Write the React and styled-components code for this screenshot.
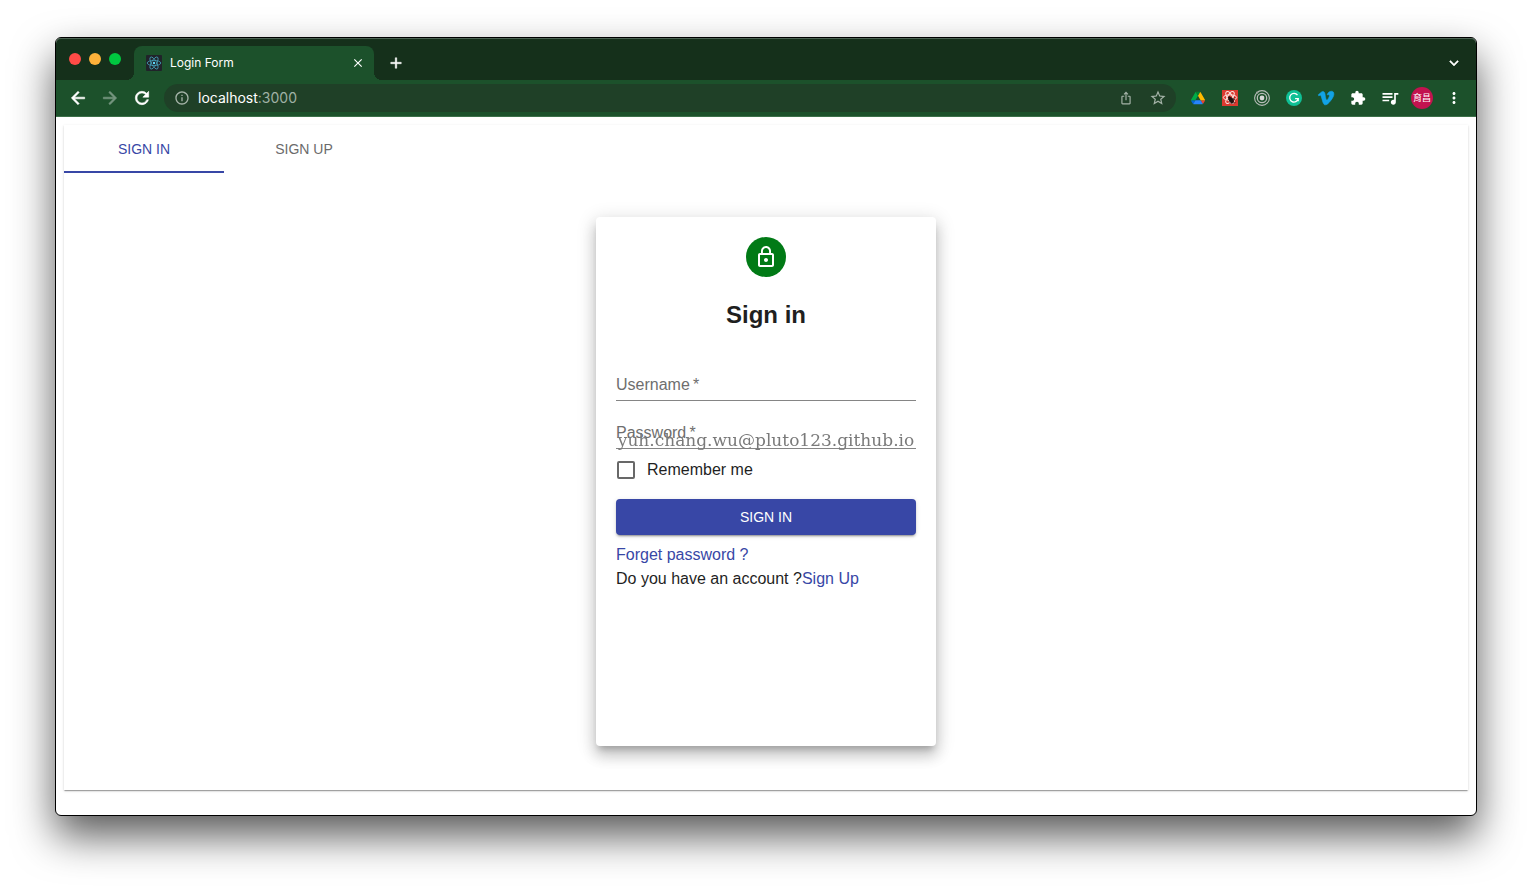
import React, { useState } from "react";
import styled, { createGlobalStyle } from "styled-components";
import {
  MdAdd,
  MdArrowBack,
  MdArrowForward,
  MdClose,
  MdExtension,
  MdInfoOutline,
  MdIosShare,
  MdKeyboardArrowDown,
  MdLockOutline,
  MdMoreVert,
  MdQueueMusic,
  MdRefresh,
  MdStarBorder,
} from "react-icons/md";
import { FaVimeoV } from "react-icons/fa";

const chromeFont = 'Inter, "Noto Sans CJK TC", sans-serif';
const primary = "#3847a6";

const GlobalStyle = createGlobalStyle`
  *, *::before, *::after { box-sizing: border-box; }
  body {
    margin: 0;
    background: #fff;
    color: #1f1f1f;
    font: 16px/24px "Liberation Sans", Helvetica, Arial, sans-serif;
  }
  button { margin: 0; padding: 0; border: 0; background: none; font: inherit; cursor: pointer; }
`;

const Desktop = styled.div`
  display: flex;
  flex-direction: column;
  min-height: 100vh;
  padding: 37px 55px 73px;
  overflow: hidden;
`;

const Window = styled.div`
  position: relative;
  display: flex;
  flex: 1;
  flex-direction: column;
  border: 1px solid #000;
  border-radius: 6px;
  background: #fff;
  box-shadow: 0 20px 42px rgba(0, 0, 0, 0.65);
`;

const TabStrip = styled.div`
  display: flex;
  align-items: flex-end;
  height: 42px;
  padding: 0 6px 0 13px;
  border-radius: 5px 5px 0 0;
  background: #15301b;
  box-shadow: inset 0 1px #4c6253;
  color: #fff;
  font-family: ${chromeFont};
`;

const TrafficLights = styled.div`
  display: flex;
  align-self: center;
  gap: 8px;
  margin-right: 13px;
`;

const Light = styled.button`
  width: 12px;
  height: 12px;
  border-radius: 50%;
  background: ${(p) => p.$color};
`;

const BrowserTab = styled.div`
  position: relative;
  display: flex;
  align-items: center;
  gap: 8px;
  width: 240px;
  height: 34px;
  padding: 0 8px 0 12px;
  border-radius: 8px 8px 0 0;
  background: #1c512b;
  font-size: 12px;

  &::before,
  &::after {
    content: "";
    position: absolute;
    bottom: 0;
    width: 8px;
    height: 8px;
  }
  &::before {
    right: 100%;
    background: radial-gradient(circle at 0 0, transparent 8px, #1c512b 8px);
  }
  &::after {
    left: 100%;
    background: radial-gradient(circle at 100% 0, transparent 8px, #1c512b 8px);
  }
`;

const TabTitle = styled.span`
  flex: 1;
`;

const IconButton = styled.button`
  display: flex;
  flex: none;
  align-items: center;
  justify-content: center;
  width: ${(p) => p.$width || 32}px;
  height: ${(p) => p.$height || 28}px;
  margin-left: ${(p) => p.$push || "0"};
  color: ${(p) => p.$color || "#fff"};

  /* Material icons carry an unfilled bounding box that must stay unstroked */
  path[d^="M0 0h24v24H0"] {
    stroke: none;
  }
`;

const Toolbar = styled.div`
  display: flex;
  align-items: center;
  height: 37px;
  padding: 0 6px;
  border-bottom: 1px solid #3c7049;
  background: #1c512b;
  font-family: ${chromeFont};
`;

const AddressBar = styled.div`
  display: flex;
  flex: 1;
  align-items: center;
  height: 28px;
  margin: 0 6px;
  padding: 0 2px;
  border-radius: 14px;
  background: #1f4027;
  color: #a0b1a5;
  font-size: 14px;
`;

const Address = styled.span`
  flex: 1;
`;

const Host = styled.span`
  color: #fff;
`;

const Profile = styled.span`
  display: grid;
  place-items: center;
  width: 22px;
  height: 22px;
  border-radius: 50%;
  background: #c2134f;
  color: #fff;
  font-size: 9px;
  line-height: 12px;
`;

const Viewport = styled.main`
  display: flex;
  flex: 1;
  flex-direction: column;
  padding: 8px 8px 25px;
`;

const Paper = styled.section`
  display: flex;
  flex: 1;
  flex-direction: column;
  background: #fff;
  border-radius: ${(p) => p.$radius || 0}px;
  box-shadow: ${(p) =>
    p.$raised
      ? "0 6px 6px -3px rgba(0,0,0,.2), 0 10px 14px 1px rgba(0,0,0,.14), 0 4px 18px 3px rgba(0,0,0,.12)"
      : "0 2px 1px -1px rgba(0,0,0,.2), 0 1px 1px 0 rgba(0,0,0,.14), 0 1px 3px 0 rgba(0,0,0,.12)"};
`;

const Card = styled(Paper)`
  align-self: center;
  width: 340px;
  margin: 44px 0;
  padding: 20px;
`;

const PageTabs = styled.div`
  display: flex;
  height: 48px;
`;

const PageTab = styled.button`
  width: 160px;
  border-bottom: 2px solid ${(p) => (p.$active ? primary : "transparent")};
  border-top: 2px solid transparent;
  color: ${(p) => (p.$active ? primary : "#6b6b6b")};
  font-size: 14px;
  text-transform: uppercase;
`;

const Avatar = styled.div`
  display: grid;
  align-self: center;
  place-items: center;
  width: 40px;
  height: 40px;
  border-radius: 50%;
  background: #017a16;
  color: #fff;
`;

const Heading = styled.h2`
  margin: 20px 0;
  font-size: 24px;
  line-height: 36px;
  text-align: center;
`;

const Form = styled.form`
  display: flex;
  flex-direction: column;
`;

const Field = styled.div`
  position: relative;
  display: flex;
  padding-top: 16px;
`;

const FieldLabel = styled.label`
  position: absolute;
  left: 0;
  bottom: 4px;
  color: #6e6e6e;
  pointer-events: none;
`;

const TextInput = styled.input`
  width: 100%;
  height: 32px;
  padding: 6px 0 7px;
  border: 0;
  border-bottom: 1px solid #858585;
  outline: 0;
  background: transparent;
  font: inherit;
`;

const CheckRow = styled.label`
  display: flex;
  align-items: center;
  gap: 12px;
  height: 42px;
  padding-left: 1px;
`;

const Checkbox = styled.input`
  appearance: none;
  width: 18px;
  height: 18px;
  margin: 0;
  border: 2px solid #686868;
  border-radius: 2px;
  &:checked { background: ${primary}; border-color: ${primary}; }
`;

const SubmitButton = styled.button`
  height: 36px;
  margin: 8px 0;
  border-radius: 4px;
  background: ${primary};
  box-shadow: 0 3px 1px -2px rgba(0, 0, 0, 0.2), 0 2px 2px 0 rgba(0, 0, 0, 0.14),
    0 1px 5px 0 rgba(0, 0, 0, 0.12);
  color: #fff;
  font-size: 14px;
  text-transform: uppercase;
`;

const Line = styled.p`
  margin: 0;
`;

const Link = styled.a`
  color: ${primary};
  text-decoration: none;
`;

const Watermark = styled.div`
  position: fixed;
  inset: 0;
  display: grid;
  place-items: center;
  padding-bottom: 10px;
  color: #7a7a7a;
  font-family: "DejaVu Serif", serif;
  font-size: 17px;
  pointer-events: none;
`;

const ReactFavicon = () => (
  <svg width="16" height="16" viewBox="0 0 16 16" aria-hidden="true">
    <rect width="16" height="16" rx="1" fill="#20232a" />
    <g fill="none" stroke="#45a0b8" strokeWidth="0.8">
      <ellipse cx="8" cy="8" rx="6.8" ry="2.6" />
      <ellipse cx="8" cy="8" rx="6.8" ry="2.6" transform="rotate(60 8 8)" />
      <ellipse cx="8" cy="8" rx="6.8" ry="2.6" transform="rotate(120 8 8)" />
    </g>
    <circle cx="8" cy="8" r="1.2" fill="#61dafb" />
  </svg>
);

const DriveIcon = () => (
  <svg width="14" height="14" viewBox="0 -2 87.3 82" aria-hidden="true">
    <path d="m6.6 66.85 3.85 6.65c.8 1.4 1.95 2.5 3.3 3.3l13.75-23.8h-27.5c0 1.55.4 3.1 1.2 4.5z" fill="#0066da" />
    <path d="m43.65 25-13.75-23.8c-1.35.8-2.5 1.9-3.3 3.3l-25.4 44a9.06 9.06 0 0 0-1.2 4.5h27.5z" fill="#00ac47" />
    <path d="m73.55 76.8c1.35-.8 2.5-1.9 3.3-3.3l1.6-2.75 7.65-13.25c.8-1.4 1.2-2.95 1.2-4.5h-27.5l5.85 11.5z" fill="#ea4335" />
    <path d="m43.65 25 13.75-23.8c-1.35-.8-2.9-1.2-4.5-1.2h-18.5c-1.6 0-3.15.45-4.5 1.2z" fill="#00832d" />
    <path d="m59.8 53h-32.3l-13.75 23.8c1.35.8 2.9 1.2 4.5 1.2h50.8c1.6 0 3.15-.45 4.5-1.2z" fill="#2684fc" />
    <path d="m73.4 26.5-12.7-22c-.8-1.4-1.95-2.5-3.3-3.3l-13.75 23.8 16.15 28h27.45c0-1.55-.4-3.1-1.2-4.5z" fill="#ffba00" />
  </svg>
);

const DevToolsIcon = () => (
  <svg width="16" height="16" viewBox="0 0 16 16" aria-hidden="true">
    <rect width="16" height="16" fill="#dc3a30" />
    <g fill="none" stroke="#fbe4e1" strokeWidth="1">
      <ellipse cx="8" cy="7.5" rx="6.7" ry="2.7" />
      <ellipse cx="8" cy="7.5" rx="6.7" ry="2.7" transform="rotate(60 8 7.5)" />
      <ellipse cx="8" cy="7.5" rx="6.7" ry="2.7" transform="rotate(120 8 7.5)" />
    </g>
    <g fill="#25100f" stroke="#25100f">
      <ellipse cx="9.3" cy="10.2" rx="1.8" ry="2.5" transform="rotate(-35 9.3 10.2)" />
      <circle cx="7.4" cy="7.7" r="1" />
      <path d="M6 9.5h7M7 12.5l5.5-5M9 13.5l4.5-1" strokeWidth="0.7" />
    </g>
  </svg>
);

const TargetIcon = () => (
  <svg width="16" height="16" viewBox="0 0 16 16" fill="none" stroke="#b7bdb8" aria-hidden="true">
    <circle cx="8" cy="8" r="7.4" strokeWidth="1.1" />
    <circle cx="8" cy="8" r="4.7" strokeWidth="1.3" />
    <circle cx="8" cy="8" r="2.4" fill="#d5d8d5" stroke="none" />
    <circle cx="3.2" cy="2.6" r="1.2" fill="#9aa49c" stroke="none" />
  </svg>
);

const GrammarIcon = () => (
  <svg width="16" height="16" viewBox="0 0 16 16" aria-hidden="true">
    <circle cx="8" cy="8" r="8" fill="#0fc095" />
    <path d="M11.5 5.2A4.3 4.3 0 1 0 12.2 8.7H9.1M12.2 8.7v2.6" fill="none" stroke="#fff" strokeWidth="1.3" />
  </svg>
);

const Menu = [
  ["Drive", <DriveIcon />],
  ["React developer tools", <DevToolsIcon />],
  ["Recorder", <TargetIcon />],
  ["Writing assistant", <GrammarIcon />],
  ["Vimeo", <FaVimeoV size={18} color="#12a3e6" strokeWidth={16} />],
  ["Extensions", <MdExtension size={16} />],
  ["Media", <MdQueueMusic size={20} />],
  ["Profile", <Profile>育昌</Profile>],
  ["Menu", <MdMoreVert size={18} />],
];

function TextField({ id, label, type = "text" }) {
  return (
    <Field>
      <TextInput id={id} type={type} />
      <FieldLabel htmlFor={id}>{label}{"\u2009*"}</FieldLabel>
    </Field>
  );
}

export default function App() {
  const [tab, setTab] = useState(0);
  return (
    <>
      <GlobalStyle />
      <Desktop>
        <Window>
          <TabStrip>
            <TrafficLights>
              <Light $color="#ff4b47" aria-label="Close window" />
              <Light $color="#fdb23a" aria-label="Minimize window" />
              <Light $color="#00c840" aria-label="Zoom window" />
            </TrafficLights>
            <BrowserTab>
              <ReactFavicon />
              <TabTitle>Login Form</TabTitle>
              <IconButton $width={16} aria-label="Close tab"><MdClose size={14} /></IconButton>
            </BrowserTab>
            <IconButton $width={44} $height={34} aria-label="New tab"><MdAdd size={18} strokeWidth={0.6} /></IconButton>
            <IconButton $height={34} $push="auto" aria-label="Search tabs"><MdKeyboardArrowDown size={18} strokeWidth={0.6} /></IconButton>
          </TabStrip>
          <Toolbar>
            <IconButton aria-label="Back"><MdArrowBack size={20} strokeWidth={0.7} /></IconButton>
            <IconButton aria-label="Forward" $color="#769680"><MdArrowForward size={20} strokeWidth={0.7} /></IconButton>
            <IconButton aria-label="Reload"><MdRefresh size={20} strokeWidth={0.7} /></IconButton>
            <AddressBar>
              <IconButton aria-label="Site information" $color="#a5b3a8"><MdInfoOutline size={16} /></IconButton>
              <Address><Host>localhost</Host>:3000</Address>
              <IconButton aria-label="Share" $color="#a5b3a8"><MdIosShare size={14} /></IconButton>
              <IconButton aria-label="Bookmark" $color="#a5b3a8"><MdStarBorder size={18} /></IconButton>
            </AddressBar>
            {Menu.map(([name, icon]) => (
              <IconButton key={name} aria-label={name}>{icon}</IconButton>
            ))}
          </Toolbar>
          <Viewport>
            <Paper>
              <PageTabs role="tablist">
                {["Sign in", "Sign up"].map((name, i) => (
                  <PageTab key={name} role="tab" aria-selected={tab === i} $active={tab === i} onClick={() => setTab(i)}>
                    {name}
                  </PageTab>
                ))}
              </PageTabs>
              <Card $raised $radius={4}>
                <Avatar><MdLockOutline size={24} /></Avatar>
                <Heading>Sign in</Heading>
                <Form onSubmit={(e) => e.preventDefault()}>
                  <TextField id="username" label="Username" />
                  <TextField id="password" label="Password" type="password" />
                  <CheckRow>
                    <Checkbox type="checkbox" />
                    Remember me
                  </CheckRow>
                  <SubmitButton type="submit">Sign in</SubmitButton>
                </Form>
                <Line><Link href="#forgot">Forget password ?</Link></Line>
                <Line>Do you have an account ?<Link href="#signup">Sign Up</Link></Line>
              </Card>
            </Paper>
          </Viewport>
        </Window>
      </Desktop>
      <Watermark>yuh.chang.wu@pluto123.github.io</Watermark>
    </>
  );
}
